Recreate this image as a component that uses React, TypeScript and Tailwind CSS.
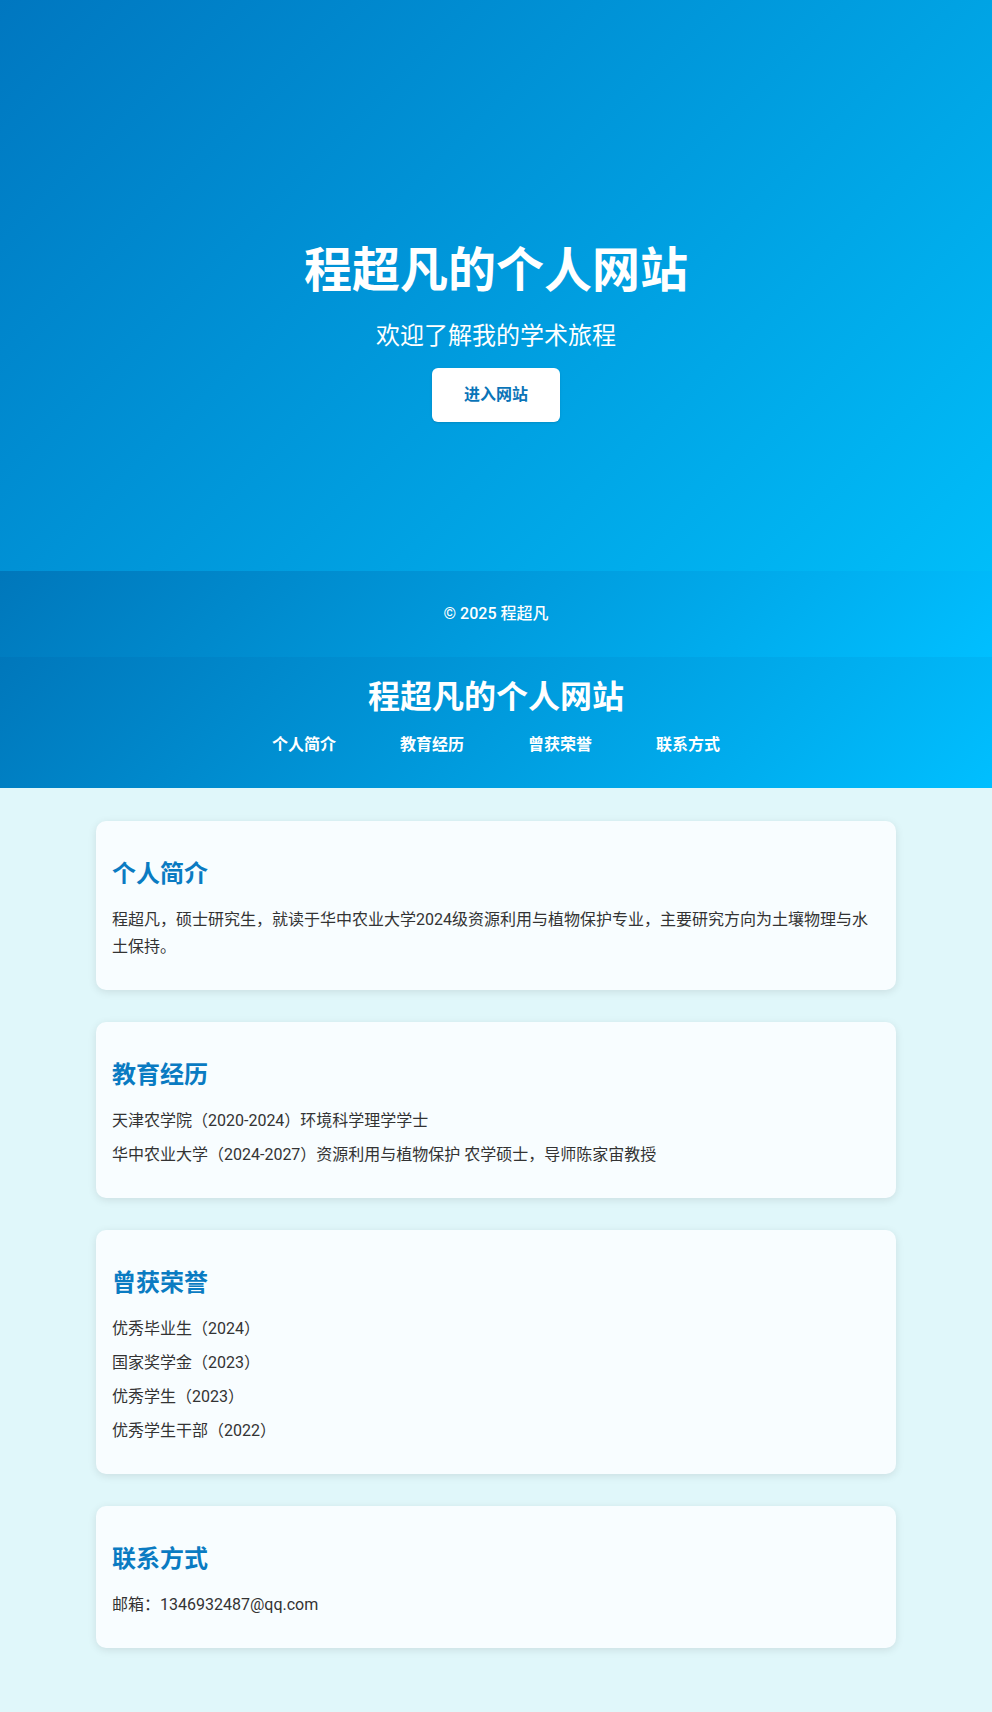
const sections = [
  {
    id: "about",
    title: "个人简介",
    paragraphs: [
      "程超凡，硕士研究生，就读于华中农业大学2024级资源利用与植物保护专业，主要研究方向为土壤物理与水土保持。",
    ],
  },
  {
    id: "education",
    title: "教育经历",
    paragraphs: [
      "天津农学院（2020-2024）环境科学理学学士",
      "华中农业大学（2024-2027）资源利用与植物保护 农学硕士，导师陈家宙教授",
    ],
  },
  {
    id: "honors",
    title: "曾获荣誉",
    paragraphs: [
      "优秀毕业生（2024）",
      "国家奖学金（2023）",
      "优秀学生（2023）",
      "优秀学生干部（2022）",
    ],
  },
  {
    id: "contact",
    title: "联系方式",
    paragraphs: ["邮箱：1346932487@qq.com"],
  },
];

const navItems = ["个人简介", "教育经历", "曾获荣誉", "联系方式"];

export default function App() {
  return (
    <div className="min-h-[1712px] bg-[#e0f7fa] font-['Roboto','Noto_Sans_CJK_SC',sans-serif] text-[#333]">
      {/* welcome screen */}
      <section className="flex h-[571px] flex-col items-center bg-[linear-gradient(135deg,#0077c0,#00bdf9)] pt-[242px] text-white">
        <h1 className="text-[48px] font-bold leading-[58px]">程超凡的个人网站</h1>
        <p className="mt-[18px] text-2xl leading-9">欢迎了解我的学术旅程</p>
        <button className="mt-[14px] h-[54px] w-[128px] rounded-md bg-white text-base font-bold text-[#0a74b8] shadow-sm">
          进入网站
        </button>
      </section>

      <footer className="flex h-[86px] items-center justify-center bg-[linear-gradient(135deg,#0077bb,#00bfff)] text-base font-medium text-white">
        © 2025 程超凡
      </footer>

      <header className="flex flex-col items-center bg-[linear-gradient(135deg,#0077bb,#00bfff)] pb-[31px] pt-4 text-white">
        <h1 className="text-[32px] font-bold leading-[48px]">程超凡的个人网站</h1>
        <nav className="mt-3 flex gap-16 text-base font-bold leading-6">
          {navItems.map((item) => (
            <a key={item} href={"#" + item} className="text-white">
              {item}
            </a>
          ))}
        </nav>
      </header>

      <main className="mx-auto flex max-w-[800px] flex-col gap-8 pt-[33px]">
        {sections.map((s) => (
          <section
            key={s.id}
            id={s.id}
            className="rounded-[10px] bg-[#f8fdff] px-4 pb-[30px] pt-[35px] shadow-[0_2px_8px_rgba(0,0,0,0.1)]"
          >
            <h2 className="mb-[14px] text-2xl font-bold leading-9 text-[#0a7bc2]">{s.title}</h2>
            <div className="flex flex-col gap-[7px] text-base leading-[27px]">
              {s.paragraphs.map((p) => (
                <p key={p}>{p}</p>
              ))}
            </div>
          </section>
        ))}
      </main>
    </div>
  );
}
